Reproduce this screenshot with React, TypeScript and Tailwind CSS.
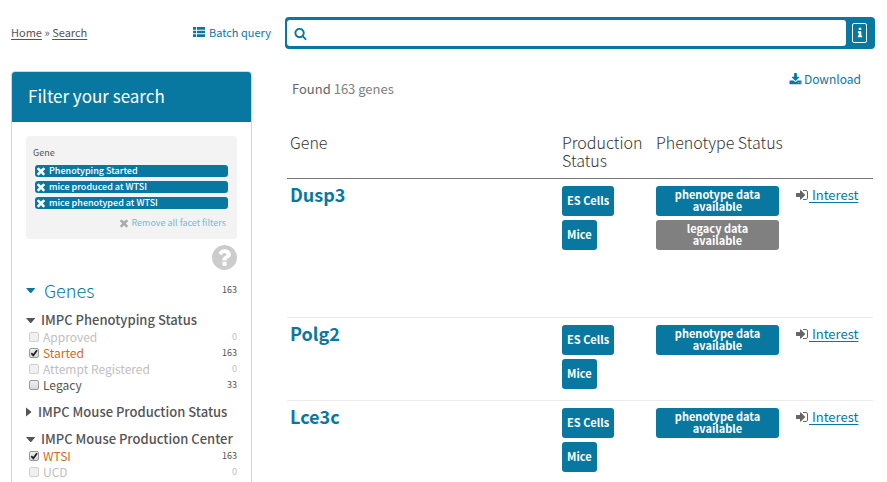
import React from "react";

const ICONS = {
  search:
    "M1216 832q0-185-131.5-316.5t-316.5-131.5-316.5 131.5-131.5 316.5 131.5 316.5 316.5 131.5 316.5-131.5 131.5-316.5zm512 832q0 52-38 90t-90 38q-54 0-90-38l-343-342q-179 124-399 124-143 0-273.5-55.5t-225-150-150-225-55.5-273.5 55.5-273.5 150-225 225-150 273.5-55.5 273.5 55.5 225 150 150 225 55.5 273.5q0 220-124 399l343 343q37 37 37 90z",
  times:
    "M1490 1322q0 40-28 68l-136 136q-28 28-68 28t-68-28l-294-294-294 294q-28 28-68 28t-68-28l-136-136q-28-28-28-68t28-68l294-294-294-294q-28-28-28-68t28-68l136-136q28-28 68-28t68 28l294 294 294-294q28-28 68-28t68 28l136 136q28 28 28 68t-28 68l-294 294 294 294q28 28 28 68z",
  download:
    "M1344 1344q0-26-19-45t-45-19-45 19-19 45 19 45 45 19 45-19 19-45zm256 0q0-26-19-45t-45-19-45 19-19 45 19 45 45 19 45-19 19-45zm128-224v320q0 40-28 68t-68 28h-1472q-40 0-68-28t-28-68v-320q0-40 28-68t68-28h465l135 136q58 56 136 56t136-56l136-136h464q40 0 68 28t28 68zm-325-569q17 41-14 70l-448 448q-18 19-45 19t-45-19l-448-448q-31-29-14-70 17-39 59-39h256v-448q0-26 19-45t45-19h256q26 0 45 19t19 45v448h256q42 0 59 39z",
  signIn:
    "M1312 896q0 26-19 45l-544 544q-19 19-45 19t-45-19-19-45v-288h-448q-26 0-45-19t-19-45v-384q0-26 19-45t45-19h448v-288q0-26 19-45t45-19 45 19l544 544q19 19 19 45zm352-352v704q0 119-84.5 203.5t-203.5 84.5h-320q-13 0-22.5-9.5t-9.5-22.5q0-4-1-20t-.5-26.5 3-23.5 10-19.5 20.5-6.5h320q66 0 113-47t47-113v-704q0-66-47-113t-113-47h-312l-11.5-1-11.5-3-8-5.5-7-9-2-13.5q0-4-1-20t-.5-26.5 3-23.5 10-19.5 20.5-6.5h320q119 0 203.5 84.5t84.5 203.5z",
  question:
    "M1024 1376v-192q0-14-9-23t-23-9h-192q-14 0-23 9t-9 23v192q0 14 9 23t23 9h192q14 0 23-9t9-23zm256-672q0-88-55.5-163t-138.5-116-170-41q-243 0-371 213-15 24 8 42l132 100q7 6 19 6 16 0 25-12 53-68 86-92 34-24 86-24 48 0 85.5 26t37.5 59q0 38-20 61t-68 45q-63 28-115.5 86.5t-52.5 125.5v36q0 14 9 23t23 9h192q14 0 23-9t9-23q0-19 21.5-49.5t54.5-49.5q32-18 49-28.5t46-35 44.5-48 28-60.5 12.5-81zm384 192q0 209-103 385.5t-279.5 279.5-385.5 103-385.5-103-279.5-279.5-103-385.5 103-385.5 279.5-279.5 385.5-103 385.5 103 279.5 279.5 103 385.5z",
  info: "M1216 1344v128q0 26-19 45t-45 19h-512q-26 0-45-19t-19-45v-128q0-26 19-45t45-19h64v-384h-64q-26 0-45-19t-19-45v-128q0-26 19-45t45-19h384q26 0 45 19t19 45v576h64q26 0 45 19t19 45zm-128-1152v192q0 26-19 45t-45 19h-256q-26 0-45-19t-19-45v-192q0-26 19-45t45-19h256q26 0 45 19t19 45z",
  list: "M0 160h448v384h-448zM576 160h1216v384h-1216zM0 704h448v384h-448zM576 704h1216v384h-1216zM0 1248h448v384h-448zM576 1248h1216v384h-1216z",
};

function Icon({ name, className, box = "0 0 1792 1792" }: { name: keyof typeof ICONS; className: string; box?: string }) {
  return (
    <svg viewBox={box} fill="currentColor" aria-hidden="true" className={`shrink-0 ${className}`}>
      <path d={ICONS[name]} />
    </svg>
  );
}

function Caret({ open }: { open: boolean }) {
  return open ? (
    <svg viewBox="0 0 10 10" fill="currentColor" aria-hidden="true" className="size-[10px] shrink-0">
      <path d="M0 3h9.4L5.4 7.8q-.7.6-1.4 0z" />
    </svg>
  ) : (
    <svg viewBox="0 0 6 10" fill="currentColor" aria-hidden="true" className="h-[10px] w-[6px] shrink-0">
      <path d="M0 0.5v9L5 5.5q.5-.5 0-1z" />
    </svg>
  );
}

type Option = { label: string; count: number; checked?: boolean };

function OptionRow({ label, count, checked = false }: Option) {
  const disabled = count === 0;
  const id = `facet-${label.toLowerCase().replace(/\s+/g, "-")}`;
  return (
    <li className={`flex h-4 items-center ${disabled ? "text-[#c0c0c0]" : "text-[#555]"}`}>
      <span className="relative ml-[3px] mr-1 size-[10px] shrink-0">
        <input
          id={id}
          type="checkbox"
          defaultChecked={checked}
          disabled={disabled}
          className="peer block size-[10px] appearance-none rounded-[2px] border border-[#999] bg-linear-to-b from-[#f0f0f0] to-[#d8d8d8] disabled:border-[#d0d0d0] disabled:to-[#f0f0f0]"
        />
        <svg
          viewBox="0 0 10 10"
          fill="none"
          stroke="#222"
          strokeWidth="1.8"
          aria-hidden="true"
          className="pointer-events-none absolute inset-0 hidden size-[10px] peer-checked:block"
        >
          <path d="M2.3 5.2 4.3 7.3 8 2.2" />
        </svg>
      </span>
      <label htmlFor={id} className={`flex-1 text-[12px] leading-4 ${checked ? "text-[#d2691e]" : ""}`}>
        {label}
      </label>
      <span className="text-[9px] leading-4">{count}</span>
    </li>
  );
}

function Facet({ title, options }: { title: string; options?: Option[] }) {
  return (
    <section>
      <h3>
        <button
          type="button"
          aria-expanded={!!options}
          className={`flex h-4 items-center text-[13px] leading-4 font-medium whitespace-nowrap text-[#555] ${options ? "gap-[5px]" : "gap-[6px]"}`}
        >
          <Caret open={!!options} />
          {title}
        </button>
      </h3>
      {options && (
        <ul className="mt-px">
          {options.map((o) => (
            <OptionRow key={o.label} {...o} />
          ))}
        </ul>
      )}
    </section>
  );
}

function Sidebar() {
  return (
    <aside className="rounded-t-sm border border-[#d5d5d5] bg-white">
      <h2 className="flex h-[50px] items-center rounded-t-[3px] bg-[#0978a1] pb-0.5 pl-4 text-[17px] leading-6 text-white">
        Filter your search
      </h2>
      <div className="px-[14px] pt-[14px] pb-6">
        <div className="rounded-[3px] bg-[#f3f3f3] px-[9px] pt-[11px] pb-2">
          <p className="-ml-[2px] text-[9px] leading-3 text-[#555]">Gene</p>
          <ul className="mt-[6px] flex flex-col gap-1">
            {["Phenotyping Started", "mice produced at WTSI", "mice phenotyped at WTSI"].map((f) => (
              <li key={f}>
                <button
                  type="button"
                  className="flex h-3 w-full items-center gap-[2px] rounded-[3px] bg-[#0978a1] text-[9px] leading-3 font-medium text-white"
                >
                  <Icon name="times" className="size-3" />
                  {f}
                </button>
              </li>
            ))}
          </ul>
          <div className="mt-[6px] flex justify-end">
            <button type="button" className="mr-[2px] flex h-4 items-center gap-px text-[9px] leading-4 text-[#7db8cd]">
              <Icon name="times" className="size-3 text-[#aaa]" />
              Remove all facet filters
            </button>
          </div>
        </div>
        <div className="mt-[6px] flex justify-end">
          <button type="button" aria-label="Help" className="text-[#ccc]">
            <Icon name="question" box="128 128 1536 1536" className="size-[25px]" />
          </button>
        </div>
        <div className="mt-2 flex h-6 items-center justify-between">
          <button type="button" aria-expanded="true" className="flex items-center gap-2 text-[18px] leading-6 font-light text-[#0978a1]">
            <Caret open />
            Genes
          </button>
          <span className="text-[9px] leading-4 text-[#555]">163</span>
        </div>
        <div className="mt-[10px] flex flex-col gap-[11px]">
          <Facet
            title="IMPC Phenotyping Status"
            options={[
              { label: "Approved", count: 0 },
              { label: "Started", count: 163, checked: true },
              { label: "Attempt Registered", count: 0 },
              { label: "Legacy", count: 33 },
            ]}
          />
          <Facet title="IMPC Mouse Production Status" />
          <Facet
            title="IMPC Mouse Production Center"
            options={[
              { label: "WTSI", count: 163, checked: true },
              { label: "UCD", count: 0 },
            ]}
          />
        </div>
      </div>
    </aside>
  );
}

const PILL = "flex h-[30px] items-center justify-center rounded-[3px] px-[5px] pb-0.5 text-center text-[11px] leading-3 font-bold text-white";

const GENES = [
  { symbol: "Dusp3", legacy: true },
  { symbol: "Polg2", legacy: false },
  { symbol: "Lce3c", legacy: false },
];

function GeneTable() {
  return (
    <table className="w-full table-fixed border-collapse text-left">
      <colgroup>
        <col />
        <col className="w-[94px]" />
        <col className="w-[140px]" />
        <col className="w-[78px]" />
      </colgroup>
      <thead>
        <tr className="border-b border-[#777] align-top text-[16px] leading-[18px] text-[#333]">
          <th className="pb-[9px] pl-[3px] font-light">Gene</th>
          <th className="pb-[9px] pl-px font-light">Production Status</th>
          <th className="pb-[9px] pl-px font-light">Phenotype Status</th>
          <th aria-label="Interest" />
        </tr>
      </thead>
      <tbody>
        {GENES.map((g) => (
          <tr key={g.symbol} className={`border-b border-[#ececec] align-top ${g.legacy ? "h-[139px]" : "h-[83px]"}`}>
            <td className="pt-[3px] pl-[3px]">
              <a href={`#${g.symbol}`} className="text-[18px] leading-6 font-bold text-[#0978a1]">
                {g.symbol}
              </a>
            </td>
            <td className="pt-[7px] pl-px">
              <div className="flex flex-col items-start gap-1">
                <a href="#es" className={`${PILL} bg-[#0978a1]`}>
                  ES Cells
                </a>
                <a href="#mice" className={`${PILL} bg-[#0978a1]`}>
                  Mice
                </a>
              </div>
            </td>
            <td className="pt-[7px] pr-[16px] pl-px">
              <div className="flex flex-col gap-1">
                <a href="#phenotype" className={`${PILL} bg-[#0978a1]`}>
                  phenotype data
                  <br />
                  available
                </a>
                {g.legacy && (
                  <a href="#legacy" className={`${PILL} bg-[#808080]`}>
                    legacy data
                    <br />
                    available
                  </a>
                )}
              </div>
            </td>
            <td className="pt-2">
              <div className="flex items-center text-[13px] leading-4">
                <Icon name="signIn" className="size-[14px] text-[#666]" />
                <a href="#interest" className="whitespace-pre text-[#0978a1] underline underline-offset-2">
                  {" Interest"}
                </a>
              </div>
            </td>
          </tr>
        ))}
      </tbody>
    </table>
  );
}

export default function App() {
  return (
    <div className="flex h-screen gap-[33px] overflow-hidden bg-white pt-[17px] pr-3 pl-[11px] font-['Noto_Sans_CJK_SC','Open_Sans',sans-serif] text-[#555]">
      <div className="w-[241px] shrink-0">
        <div className="flex h-8 items-center justify-between pb-0.5 text-[11px] leading-4">
          <nav aria-label="Breadcrumb">
            <a href="#home" className="underline underline-offset-2">Home</a>
            {" » "}
            <a href="#search" className="underline underline-offset-2">Search</a>
          </nav>
        </div>
        <div className="mt-[22px]">
          <Sidebar />
        </div>
      </div>
      <main className="min-w-0 flex-1">
        <div className="flex h-8 items-center">
          <a href="#batch" className="-ml-[92px] flex w-[92px] shrink-0 items-center gap-1 pb-0.5 text-[11px] leading-4 whitespace-nowrap text-[#0978a1]">
            <Icon name="list" className="size-3" />
            Batch query
          </a>
          <form role="search" className="flex h-8 min-w-0 flex-1 items-center rounded-sm bg-[#0978a1] py-[3px] pr-2 pl-[2px]">
            <label className="flex h-[26px] min-w-0 flex-1 items-center rounded-[3px] bg-white pl-[7px] text-[#0978a1]">
              <Icon name="search" className="size-[13px]" />
              <input type="text" aria-label="Search genes" className="ml-2 min-w-0 flex-1 text-[13px] outline-none" />
            </label>
            <button type="button" aria-label="Search help" className="ml-[6px] flex h-5 w-[15px] items-center justify-center rounded-[2px] border border-white text-white">
              <Icon name="info" className="size-3" />
            </button>
          </form>
        </div>
        <div className="mt-[22px] flex items-start justify-between pr-[14px] pl-[7px]">
          <p className="mt-2 text-[13px] leading-5 text-[#808080]">
            <span className="text-[#666]">Found</span> 163 genes
          </p>
          <a href="#download" className="flex items-center gap-[2px] text-[12px] leading-4 text-[#0978a1]">
            <Icon name="download" className="size-[13px]" />
            Download
          </a>
        </div>
        <div className="mt-[34px] pr-[2px] pl-[2px]">
          <GeneTable />
        </div>
      </main>
    </div>
  );
}
